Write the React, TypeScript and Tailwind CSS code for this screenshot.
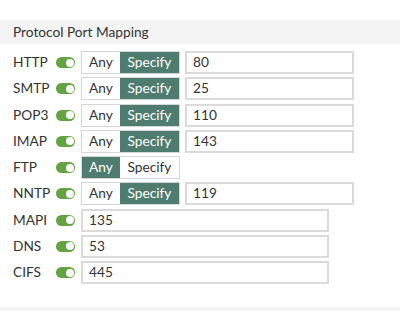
import React from "react";

type Row = { name: string; mode: "any" | "specify" | "none"; port?: string };

const rows: Row[] = [
  { name: "HTTP", mode: "specify", port: "80" },
  { name: "SMTP", mode: "specify", port: "25" },
  { name: "POP3", mode: "specify", port: "110" },
  { name: "IMAP", mode: "specify", port: "143" },
  { name: "FTP", mode: "any" },
  { name: "NNTP", mode: "specify", port: "119" },
  { name: "MAPI", mode: "none", port: "135" },
  { name: "DNS", mode: "none", port: "53" },
  { name: "CIFS", mode: "none", port: "445" },
];

function Toggle() {
  return (
    <div className="w-[19px] h-[11px] rounded-full bg-[#63a342] flex items-center justify-end pr-[1.5px]">
      <div className="w-[8px] h-[8px] rounded-full bg-white" />
    </div>
  );
}

export default function App() {
  return (
    <div
      className="w-[400px] h-[311px] bg-white text-[#333333] flex flex-col"
      style={{ fontFamily: "Lato, 'Open Sans', sans-serif" }}
    >
      <div className="mt-[20px] h-[24px] bg-[#f4f4f4] flex items-center pl-[13px] text-[13.7px]">
        Protocol Port Mapping
      </div>
      <div className="flex flex-col gap-[3.25px] pt-[7px] pl-[13px] text-[13.7px]">
        {rows.map((r) => (
          <div key={r.name} className="flex items-center h-[23px]">
            <div className="w-[43px]">{r.name}</div>
            <div className="w-[25px]">
              <Toggle />
            </div>
            {r.mode !== "none" ? (
              <>
                <div className="flex h-[23px] border border-[#d6d6d6]">
                  <div
                    className={
                      r.mode === "any"
                        ? "w-[38px] flex items-center justify-center bg-[#4e7d70] text-white"
                        : "w-[38px] flex items-center justify-center bg-white"
                    }
                  >
                    Any
                  </div>
                  <div
                    className={
                      r.mode === "specify"
                        ? "w-[59px] flex items-center justify-center bg-[#4e7d70] text-white"
                        : "w-[59px] flex items-center justify-center bg-white"
                    }
                  >
                    Specify
                  </div>
                </div>
                {r.port && (
                  <div className="ml-[5px] w-[169px] h-[23px] border-2 border-[#dadada] flex items-center pl-[6px]">
                    {r.port}
                  </div>
                )}
              </>
            ) : (
              <div className="w-[248px] h-[23px] border-2 border-[#dadada] flex items-center pl-[6px]">
                {r.port}
              </div>
            )}
          </div>
        ))}
      </div>
      <div className="flex-1" />
      <div className="h-[4px] bg-[#f4f4f4]" />
    </div>
  );
}
